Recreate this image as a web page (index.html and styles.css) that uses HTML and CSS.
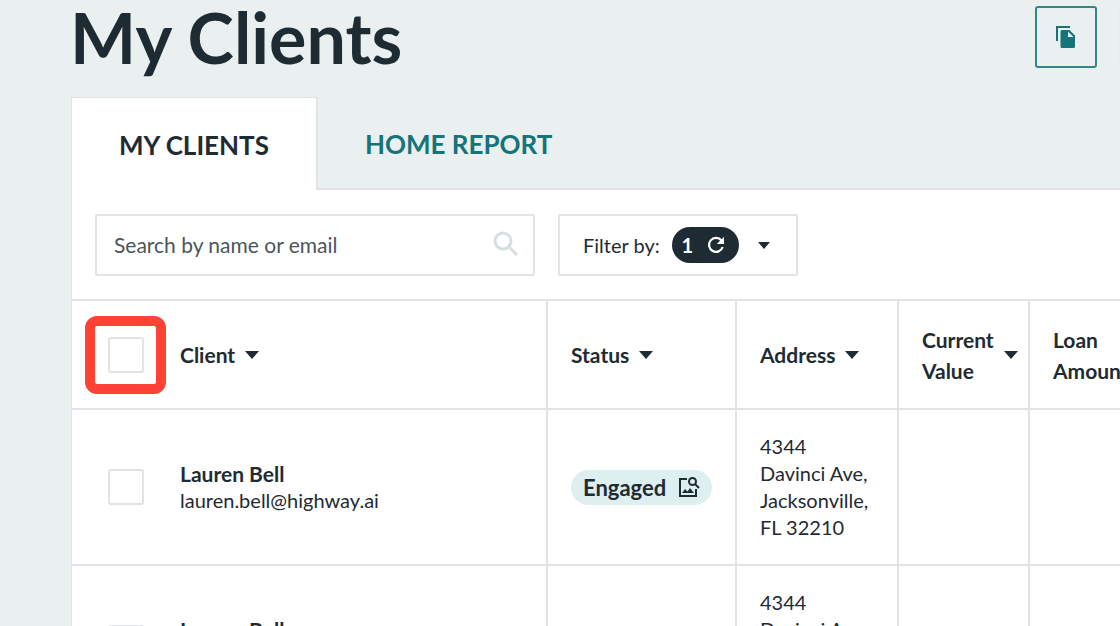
FILE: index.html
```html
<!DOCTYPE html>
<html lang="en">
<head>
<meta charset="utf-8">
<title>My Clients</title>
<link rel="stylesheet" href="styles.css">
</head>
<body>
<header class="page-header">
  <h1 class="page-title">My Clients</h1>
  <div class="actions">
    <button class="copy-button" type="button" aria-label="Copy">
      <svg width="20" height="22" viewBox="0 0 20 22" aria-hidden="true"><path d="M1 15V1h13" fill="none" stroke="currentColor" stroke-width="2"/><path d="M6 4h7.500l5.500 5.500V20.500a1.500 1.500 0 0 1-1.500 1.500H6a1.500 1.500 0 0 1-1.500-1.500v-15A1.500 1.500 0 0 1 6 4zm6 1.500V11h5.500z" fill="currentColor"/></svg>
    </button>
    <span class="action-edge"></span>
  </div>
</header>
<main class="content">
  <nav class="tabs">
    <a class="tab tab-active" href="#clients">MY CLIENTS</a>
    <a class="tab" href="#report">HOME REPORT</a>
  </nav>
  <section class="panel">
    <div class="toolbar">
      <label class="search">
        <input class="search-input" type="text" placeholder="Search by name or email" aria-label="Search by name or email">
        <svg width="26" height="26" viewBox="0 0 26 26" fill="none" stroke="currentColor" stroke-width="3" aria-hidden="true"><circle cx="10" cy="10" r="8"/><path d="M15.500 15.500L24 24"/></svg>
      </label>
      <button class="filter" type="button">
        <span>Filter by:</span>
        <span class="filter-count">1
          <svg width="18" height="18" viewBox="0 0 18 18" fill="none" aria-hidden="true"><path d="M14.500 4.500A7 7 0 1 0 15.700 11" stroke="currentColor" stroke-width="2.200"/><path d="M17 .8V8H9.800z" fill="currentColor"/></svg>
        </span>
        <svg class="caret" width="12" height="7" viewBox="0 0 12 7" aria-hidden="true"><path d="M0 0h12L6 7z" fill="currentColor"/></svg>
      </button>
    </div>
    <div class="table-scroll">
      <table class="clients">
        <colgroup><col class="col-check"><col class="col-client"><col class="col-status"><col class="col-address"><col class="col-value"><col class="col-loan"></colgroup>
        <thead>
          <tr>
            <th class="check-cell"><span class="check-wrap"><input class="check" type="checkbox" aria-label="Select all clients"><span class="highlight"></span></span></th>
            <th class="client-cell"><button class="sort" type="button">Client <svg width="14" height="8" viewBox="0 0 14 8" aria-hidden="true"><path d="M0 0h14L7 8z" fill="currentColor"/></svg></button></th>
            <th><button class="sort" type="button">Status <svg width="14" height="8" viewBox="0 0 14 8" aria-hidden="true"><path d="M0 0h14L7 8z" fill="currentColor"/></svg></button></th>
            <th><button class="sort" type="button">Address <svg width="14" height="8" viewBox="0 0 14 8" aria-hidden="true"><path d="M0 0h14L7 8z" fill="currentColor"/></svg></button></th>
            <th><button class="sort" type="button">Current<br>Value <svg width="14" height="8" viewBox="0 0 14 8" aria-hidden="true"><path d="M0 0h14L7 8z" fill="currentColor"/></svg></button></th>
            <th><button class="sort" type="button">Loan<br>Amount</button></th>
          </tr>
        </thead>
        <tbody>
          <tr>
            <td class="check-cell"><span class="check-wrap"><input class="check" type="checkbox" aria-label="Select Lauren Bell"></span></td>
            <td class="client-cell"><strong class="client-name">Lauren Bell</strong>lauren.bell@highway.ai</td>
            <td><span class="badge">Engaged <svg width="22" height="22" viewBox="0 0 22 22" fill="none" stroke="currentColor" stroke-width="2" aria-hidden="true"><path d="M9 3H2v17h16v-7"/><circle cx="14.500" cy="5.500" r="3.500"/><path d="M17 8l4 4"/><path d="M4 17l3-4 2.500 2.500L12 12l4 5z" fill="currentColor" stroke="none"/></svg></span></td>
            <td>4344<br>Davinci Ave,<br>Jacksonville,<br>FL 32210</td>
            <td></td>
            <td></td>
          </tr>
          <tr>
            <td class="check-cell"><span class="check-wrap"><input class="check" type="checkbox" aria-label="Select Lauren Bell"></span></td>
            <td class="client-cell"><strong class="client-name">Lauren Bell</strong>lauren.bell@highway.ai</td>
            <td><span class="badge">Engaged <svg width="22" height="22" viewBox="0 0 22 22" fill="none" stroke="currentColor" stroke-width="2" aria-hidden="true"><path d="M9 3H2v17h16v-7"/><circle cx="14.500" cy="5.500" r="3.500"/><path d="M17 8l4 4"/><path d="M4 17l3-4 2.500 2.500L12 12l4 5z" fill="currentColor" stroke="none"/></svg></span></td>
            <td>4344<br>Davinci Ave,<br>Jacksonville,<br>FL 32210</td>
            <td></td>
            <td></td>
          </tr>
        </tbody>
      </table>
    </div>
  </section>
</main>
</body>
</html>
```
FILE: styles.css
```css
:root {
  --ink: #1f2b33;
  --teal: #15737a;
  --line: #e0e4e6;
  --page: #eaf0f0;
}
* { box-sizing: border-box; }
html { overflow: hidden; }
body {
  margin: 0;
  background: var(--page);
  color: var(--ink);
  font-family: Lato, "Liberation Sans", sans-serif;
  font-size: 20px;
  line-height: 27px;
}
button, input { font: inherit; color: inherit; }
button { cursor: pointer; }
svg { flex: none; display: block; }
.page-header {
  display: flex;
  justify-content: space-between;
  align-items: flex-start;
  padding-left: 70px;
}
.page-title {
  margin: 0;
  font-size: 70px;
  line-height: 74px;
  font-weight: 700;
}
.actions { display: flex; gap: 22px; padding-top: 6px; }
.copy-button {
  display: flex;
  align-items: center;
  justify-content: center;
  width: 62px;
  height: 62px;
  padding: 0;
  border: 2px solid #37858b;
  border-radius: 3px;
  background: transparent;
  color: var(--teal);
}
.action-edge { width: 1px; height: 62px; background: #d8f3f8; }
.content { padding: 23px 0 0 71px; }
.tabs { display: flex; }
.tab {
  padding: 34px 47px 31px;
  border-bottom: 2px solid var(--line);
  color: var(--teal);
  font-size: 26px;
  line-height: 26px;
  font-weight: 700;
  text-decoration: none;
}
.tab:last-child { flex: 1; }
.tab-active {
  background: #fff;
  color: var(--ink);
  border: 1px solid var(--line);
  border-right-width: 2px;
  border-bottom: 0;
}
.panel { background: #fff; border-left: 1px solid var(--line); }
.toolbar { display: flex; gap: 23px; padding: 24px 24px 23px 23px; }
.search {
  display: flex;
  align-items: center;
  width: 440px;
  height: 62px;
  padding: 0 14px 2px 17px;
  border: 2px solid var(--line);
  border-radius: 2px;
  color: #d8dfe0;
}
.search-input {
  flex: 1;
  min-width: 0;
  padding: 0;
  border: 0;
  outline: 0;
  background: transparent;
  font-size: 21px;
}
.search-input::placeholder { color: #4c555b; opacity: 1; }
.filter {
  display: flex;
  align-items: center;
  width: 240px;
  height: 62px;
  padding: 0 26px 0 23px;
  border: 2px solid var(--line);
  border-radius: 2px;
  background: #fff;
  white-space: nowrap;
}
.filter-count {
  display: flex;
  align-items: center;
  justify-content: center;
  gap: 14px;
  width: 67px;
  height: 36px;
  margin-left: 12px;
  padding-right: 4px;
  border-radius: 18px;
  background: var(--ink);
  color: #fff;
  font-weight: 700;
}
.caret { margin-left: auto; }
.table-scroll { overflow: hidden; }
.clients {
  width: 1105px;
  table-layout: fixed;
  border-collapse: separate;
  border-spacing: 0;
  border-top: 2px solid var(--line);
}
.col-check { width: 84px; }
.col-client { width: 392px; }
.col-status { width: 189px; }
.col-address { width: 162px; }
.col-value { width: 131px; }
.clients th, .clients td {
  padding: 0 0 0 23px;
  border-right: 2px solid var(--line);
  border-bottom: 2px solid var(--line);
  text-align: left;
  vertical-align: middle;
}
.clients th { height: 109px; }
.clients td { height: 156px; }
.clients .check-cell { padding-left: 36px; border-right: 0; }
.clients .client-cell { padding-left: 24px; }
.client-name { display: block; font-size: 21px; }
.check-wrap { position: relative; display: block; width: 36px; height: 36px; }
.check {
  appearance: none;
  display: block;
  width: 36px;
  height: 36px;
  margin: 0;
  border: 2px solid var(--line);
  border-radius: 3px;
  background: #fff;
}
.highlight {
  position: absolute;
  inset: -21px -22px -21px -23px;
  border: 10px solid #ff4136;
  border-radius: 12px;
  pointer-events: none;
}
.sort {
  display: flex;
  align-items: center;
  gap: 10px;
  padding: 0;
  border: 0;
  background: transparent;
  font-size: 21px;
  font-weight: 700;
  line-height: 31px;
  text-align: left;
}
.badge {
  display: flex;
  align-items: center;
  gap: 12px;
  width: max-content;
  height: 35px;
  padding: 0 12px;
  border-radius: 18px;
  background: #deeff0;
  font-size: 22px;
  font-weight: 700;
}
```
